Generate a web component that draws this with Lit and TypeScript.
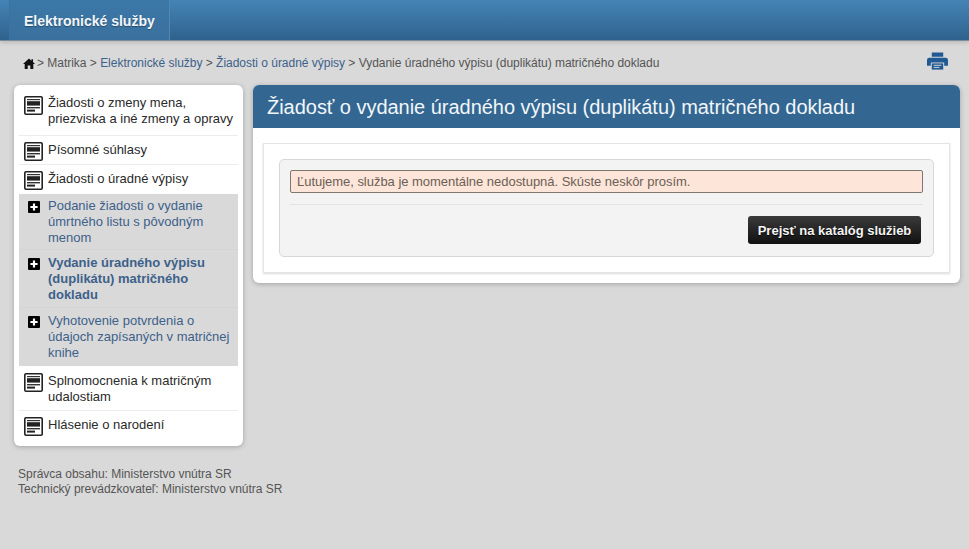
import { LitElement, html, css, svg } from "lit";
import { customElement } from "lit/decorators.js";

const docIcon = html`<svg class="doc" width="19" height="19" viewBox="0 0 19 19"><rect x=".8" y=".8" width="17.4" height="17.4" rx="1.2" fill="#fff" stroke="#222" stroke-width="1.6"/><rect x="3" y="3" width="13" height="1.2" fill="#333"/><rect x="3" y="5.2" width="13" height="4.4" fill="#222"/><rect x="3" y="11" width="13" height="1.4" fill="#333"/><rect x="3" y="13.6" width="8" height="2" fill="#222"/></svg>`;
const plusIcon = html`<svg class="plus" width="12" height="12" viewBox="0 0 12 12"><rect width="12" height="12" rx="1" fill="#000"/><path d="M6 2.4v7.2M2.4 6h7.2" stroke="#fff" stroke-width="2.2"/></svg>`;
const homeIcon = svg`<path d="M6 .4 0 5.9h1.7V11h3V7.4h2.6V11h3V5.9H12L10 4.1V1.2H8.5v1.5z" fill="#111"/>`;

@customElement("app-root")
export class AppRoot extends LitElement {
  static styles = css`
    :host { display: block; min-height: 549px; background: #d9d9d9; font-family: "Liberation Sans", Arial, sans-serif; font-size: 12px; color: #555; overflow: hidden; }
    a { color: #3d618a; text-decoration: none; }
    .top { height: 40px; border-bottom: 1px solid #7d8c99; padding-left: 9px; display: flex; background: linear-gradient(#4484b6, #2f628d); box-shadow: 0 1px 5px rgba(0,0,0,.18); }
    .tab { width: 161px; box-sizing: border-box; padding-left: 14px; line-height: 42px; font-size: 14px; font-weight: bold; color: #f2f6fa; background: linear-gradient(#3b78a8, #3a709e); border-left: 1px solid #3a73a0; border-right: 1px solid #4f88b4; text-shadow: 0 1px 1px rgba(0,0,0,.35); }
    .crumbs { height: 44px; padding: 0 21px 0 23px; display: flex; align-items: center; justify-content: space-between; box-sizing: border-box; }
    .trail { display: flex; align-items: center; gap: 2px; white-space: pre; letter-spacing: -.02px; }
    .print { margin-top: -4px; }
    .cols { display: flex; align-items: flex-start; gap: 10px; padding: 0 9px 0 14px; }
    .side { width: 229px; flex: none; background: #fff; border-radius: 6px; box-shadow: 0 1px 5px rgba(0,0,0,.25); padding: 5px 5px 8px; box-sizing: border-box; }
    .item { display: flex; gap: 5px; color: #2a2a2a; font-size: 13px; line-height: 16px; padding: 5px 5px 3px; border-bottom: 1px solid #ececec; }
    .item span { padding-top: 1px; }
    .item.first { padding-bottom: 8px; }
    .item.first span { padding-top: 0; }
    .item.plain { border-bottom: 0; padding-bottom: 4px; }
    .item.after { padding-top: 6px; padding-bottom: 5px; }
    .item:last-child { border-bottom: 0; padding-bottom: 2px; }
    .doc { flex: none; margin-top: 1px; }
    .sub { background: #d9d9d9; }
    .sub a { display: flex; font-size: 13px; line-height: 16px; padding: 5px 5px 3px 9px; gap: 8px; border-bottom: 1px solid #d4d4d4; }
    .sub a:first-child { padding-top: 4px; }
    .sub a:last-child { border-bottom: 0; padding-bottom: 5px; }
    .sub .cur { font-weight: bold; padding-bottom: 4px; }
    .plus { flex: none; margin-top: 3px; }
    .main { flex: 1; background: #fff; border-radius: 6px; box-shadow: 0 1px 5px rgba(0,0,0,.25); padding-bottom: 10px; }
    h1 { margin: 0 0 15px; height: 43px; padding-left: 14px; line-height: 45px; font-weight: normal; font-size: 20px; letter-spacing: -.03px; color: #f2f6fa; background: #336791; border-radius: 6px 6px 0 0; white-space: nowrap; }
    .card { margin: 0 10px; padding: 15px; border: 1px solid #e4e4e4; box-shadow: 0 1px 2px rgba(0,0,0,.15); }
    .well { background: #f3f3f3; border: 1px solid #d8d8d8; border-radius: 5px; padding: 10px 10px 12px 10px; }
    .alert { height: 21px; line-height: 22px; padding-left: 6px; background: #fde5d9; border: 1px solid #80786f; border-radius: 2px; font-size: 13px; letter-spacing: -.03px; color: #6b5f55; }
    hr { border: 0; border-top: 1px solid #e1e3e5; margin: 11px 0 11px; }
    .actions { display: flex; justify-content: flex-end; padding-right: 2px; }
    button { width: 173px; height: 28px; border: 0; padding: 0; border-radius: 3px; background: linear-gradient(#3a3a3a, #111); color: #f4f4f4; font: bold 13px "Liberation Sans", Arial, sans-serif; text-shadow: 0 1px 1px #000; }
    footer { padding: 21px 18px 0; line-height: 15px; color: #555; letter-spacing: -.01px; }
  `;

  render() {
    return html`
      <div class="top"><div class="tab">Elektronické služby</div></div>
      <div class="crumbs">
        <div class="trail">
          <svg width="12" height="11" viewBox="0 0 12 11">${homeIcon}</svg><span>&gt; Matrika &gt; <a href="#">Elektronické služby</a> &gt; <a href="#">Žiadosti o úradné výpisy</a> &gt; Vydanie úradného výpisu (duplikátu) matričného dokladu</span>
        </div>
        <svg class="print" width="21" height="18" viewBox="0 0 22 18">
          <path fill="#1f5a94" d="M5 0h12v4.5H5zM2.5 5.5h17A2.5 2.5 0 0 1 22 8v6h-4v-3.5H4V14H0V8a2.5 2.5 0 0 1 2.5-2.5z"/>
          <path fill="#1f5a94" d="M5 11.5h12V18H5z"/>
          <path stroke="#d9d9d9" stroke-width="1" d="M7 13.5h8M7 15.7h6"/>
        </svg>
      </div>
      <div class="cols">
        <nav class="side">
          <div class="item first">${docIcon}<span>Žiadosti o zmeny mena, priezviska a iné zmeny a opravy</span></div>
          <div class="item">${docIcon}<span>Písomné súhlasy</span></div>
          <div class="item plain">${docIcon}<span>Žiadosti o úradné výpisy</span></div>
          <div class="sub">
            <a href="#">${plusIcon}<span>Podanie žiadosti o vydanie úmrtného listu s pôvodným menom</span></a>
            <a href="#" class="cur">${plusIcon}<span>Vydanie úradného výpisu (duplikátu) matričného dokladu</span></a>
            <a href="#">${plusIcon}<span>Vyhotovenie potvrdenia o údajoch zapísaných v matričnej knihe</span></a>
          </div>
          <div class="item after">${docIcon}<span>Splnomocnenia k matričným udalostiam</span></div>
          <div class="item">${docIcon}<span>Hlásenie o narodení</span></div>
        </nav>
        <main class="main">
          <h1>Žiadosť o vydanie úradného výpisu (duplikátu) matričného dokladu</h1>
          <div class="card">
            <div class="well">
              <div class="alert">Ľutujeme, služba je momentálne nedostupná. Skúste neskôr prosím.</div>
              <hr />
              <div class="actions"><button>Prejsť na katalóg služieb</button></div>
            </div>
          </div>
        </main>
      </div>
      <footer>Správca obsahu: Ministerstvo vnútra SR<br />Technický prevádzkovateľ: Ministerstvo vnútra SR</footer>
    `;
  }
}
